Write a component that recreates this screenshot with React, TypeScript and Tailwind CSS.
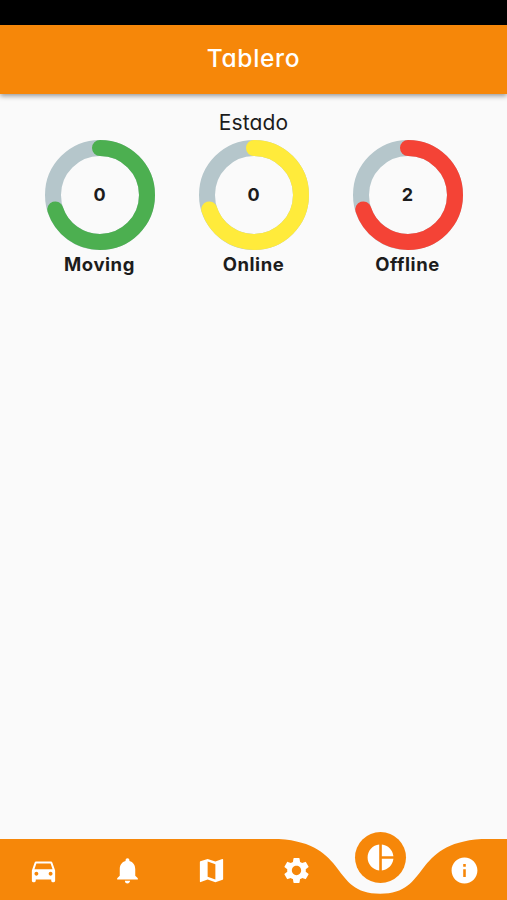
import type { IconType } from 'react-icons';
import { MdDirectionsCar, MdInfo, MdMap, MdNotifications, MdPieChart, MdSettings } from 'react-icons/md';

type Status = {
  label: string;
  count: number;
  color: string;
};

const statuses: Status[] = [
  { label: 'Moving', count: 0, color: '#4caf50' },
  { label: 'Online', count: 0, color: '#ffeb3b' },
  { label: 'Offline', count: 2, color: '#f44336' },
];

const navItems: { name: string; icon: IconType; active?: boolean }[] = [
  { name: 'car', icon: MdDirectionsCar },
  { name: 'alerts', icon: MdNotifications },
  { name: 'map', icon: MdMap },
  { name: 'settings', icon: MdSettings },
  { name: 'dashboard', icon: MdPieChart, active: true },
  { name: 'info', icon: MdInfo },
];

function StatusRing({ label, count, color }: Status) {
  return (
    <div className="flex w-[154px] flex-col items-center">
      <div className="relative size-[110px]">
        <svg viewBox="0 0 110 110" className="size-full -rotate-90" fill="none" strokeWidth={16}>
          <circle cx="55" cy="55" r="47" stroke="#b5c6cb" />
          <circle
            cx="55"
            cy="55"
            r="47"
            stroke={color}
            strokeLinecap="round"
            pathLength={100}
            strokeDasharray="70 100"
          />
        </svg>
        <span className="absolute inset-0 flex items-center justify-center pb-[2px] text-[18px] font-bold">
          {count}
        </span>
      </div>
      <span className="mt-px text-[18.5px] leading-[26px] font-bold tracking-[0.55px]">{label}</span>
    </div>
  );
}

function BottomNav() {
  return (
    <nav className="relative h-[61px] text-white">
      {/* Bar with the notch under the active item */}
      <svg viewBox="0 0 507 61" className="absolute inset-0 h-full w-full" fill="#f68709">
        <path d="M0 0H278.85C349.8 4.5 329.6 54.7 380.25 54.7C431 54.7 410.7 4.5 481.65 0H507V61H0Z" />
      </svg>
      <div className="relative grid h-full grid-cols-6 pt-px pl-px">
        {navItems.map(({ name, icon: Icon, active }) => (
          <div key={name} className="flex items-center justify-center">
            {active ? (
              <span className="relative -top-[13px] flex size-[51px] shrink-0 items-center justify-center rounded-full bg-[#f68709]">
                <Icon size={31} />
              </span>
            ) : (
              <Icon size={31} />
            )}
          </div>
        ))}
      </div>
    </nav>
  );
}

export default function App() {
  return (
    <div className="flex h-[900px] w-[507px] flex-col overflow-hidden bg-[#fafafa] font-['Inter',sans-serif] text-[#1c1c1c] [font-feature-settings:'cv11']">
      <div className="h-[25px] shrink-0 bg-black" />
      <header className="flex h-[69px] shrink-0 items-center justify-center bg-[#f68709] pb-[2px] shadow-[0_2px_5px_rgba(0,0,0,0.4)]">
        <h1 className="text-[24.5px] font-medium tracking-[0.7px] text-white">Tablero</h1>
      </header>
      <main className="flex-1 pt-[15px]">
        <h2 className="text-center text-[21px] leading-[28px] font-normal tracking-[0.1px]">Estado</h2>
        <div className="mt-[3px] flex justify-center">
          {statuses.map((s) => (
            <StatusRing key={s.label} {...s} />
          ))}
        </div>
      </main>
      <BottomNav />
    </div>
  );
}
